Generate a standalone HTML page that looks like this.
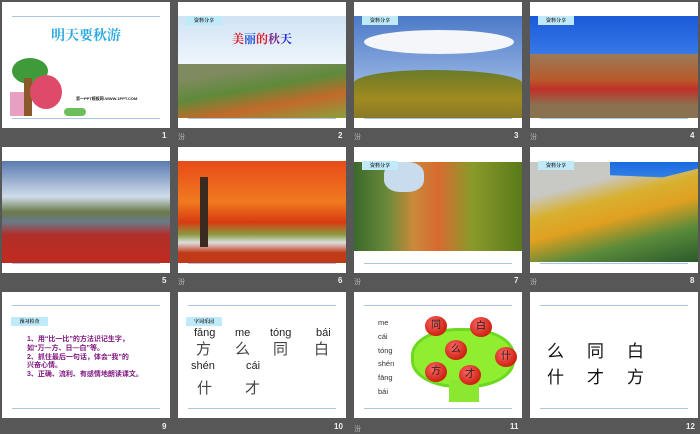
<!DOCTYPE html><html><head><meta charset="utf-8"><style>
*{margin:0;padding:0;box-sizing:border-box}
body{width:700px;height:431px;background:#575757;position:relative;overflow:hidden;font-family:"Liberation Sans","Noto Sans CJK SC",sans-serif}
.s{position:absolute;width:168px;height:126px;background:#fff;overflow:hidden}
.s div{line-height:1}
.l{position:absolute;left:10px;right:10px;height:1px;background:#a9c3e4}
.p{position:absolute;left:0;right:0}
.n{position:absolute;color:#eee;font-size:8px;font-weight:bold}
.ic{position:absolute;color:#bbb;font-size:7px}
.s .tag{position:absolute;left:8px;top:14px;width:36px;height:9px;background:#bfeafa;font-size:5px;font-weight:bold;color:#222;text-align:center;line-height:9px;font-family:"Noto Serif CJK SC",serif}
.s .a{position:absolute;width:22px;height:20px;border-radius:50%;background:radial-gradient(circle at 40% 35%,#f66,#c21 70%);color:#222;font-size:10px;text-align:center;line-height:20px}
.py{position:absolute;font-size:11px;color:#222}
.hz{position:absolute;font-size:15px;color:#444}
</style></head><body>
<!-- 1 -->
<div class="s" style="left:2px;top:2px">
<div class="l" style="top:14px"></div><div class="l" style="top:116px"></div>
<div style="position:absolute;left:0;width:168px;top:26px;text-align:center;color:#2aa8e0;font-size:14px;font-weight:bold;font-family:'Noto Serif CJK SC',serif">明天要秋游</div>
<div style="position:absolute;left:10px;top:56px;width:36px;height:26px;border-radius:50%;background:#3f9a3a"></div>
<div style="position:absolute;left:22px;top:76px;width:8px;height:38px;background:#8a5a2a"></div>
<div style="position:absolute;left:28px;top:73px;width:32px;height:34px;border-radius:50%;background:#e04a6a"></div>
<div style="position:absolute;left:8px;top:90px;width:14px;height:24px;background:#e8a0c0"></div>
<div style="position:absolute;left:62px;top:106px;width:22px;height:8px;border-radius:4px;background:#6cbf5a"></div>
<div style="position:absolute;left:74px;top:95px;font-size:4px;color:#222;font-weight:bold">第一PPT模板网-WWW.1PPT.COM</div>
</div>
<div class="n" style="left:162px;top:131px">1</div>
<!-- 2 -->
<div class="s" style="left:178px;top:2px">
<div class="p" style="top:14px;height:102px;background:linear-gradient(#cfe3f4,#eef5fb 45%,#fff 60%)"></div>
<div class="p" style="top:62px;height:54px;background:linear-gradient(170deg,#7f8a60 20%,#5f8a3a 45%,#c26a2a 70%,#8aa040)"></div>
<div class="l" style="top:116px"></div>
<div class="tag">资料分享</div>
<div style="position:absolute;left:0;width:168px;top:31px;text-align:center;font-size:12px;font-weight:bold;font-family:'Noto Serif CJK SC',serif"><span style="color:#e01b2b">美</span><span style="color:#2b55d8">丽</span><span style="color:#e01b2b">的</span><span style="color:#7a2b8a">秋</span><span style="color:#2b2bd8">天</span></div>
</div>
<div class="ic" style="left:178px;top:132px">汾</div><div class="n" style="left:338px;top:131px">2</div>
<!-- 3 -->
<div class="s" style="left:354px;top:2px">
<div class="p" style="top:14px;height:102px;background:linear-gradient(#4c7ac8,#8eaee0 60%,#9ab 66%)"></div>
<div style="position:absolute;left:10px;top:28px;width:150px;height:24px;border-radius:50%;background:#f4f6fa"></div>
<div class="p" style="top:68px;height:48px;background:linear-gradient(#6a7a2a,#a08a20 60%,#8a7a28);border-radius:50% 60% 0 0/30% 30% 0 0"></div>
<div class="l" style="top:116px"></div><div class="tag">资料分享</div>
</div>
<div class="ic" style="left:354px;top:132px">汾</div><div class="n" style="left:514px;top:131px">3</div>
<!-- 4 -->
<div class="s" style="left:530px;top:2px">
<div class="p" style="top:14px;height:102px;background:linear-gradient(#1a5ad8,#3a7ae8 40%)"></div>
<div class="p" style="top:52px;height:64px;background:linear-gradient(#9a7a5a,#b85a2a 40%,#c0302a 55%,#8a7250 80%)"></div>
<div class="l" style="top:116px"></div><div class="tag">资料分享</div>
</div>
<div class="ic" style="left:530px;top:132px">汾</div><div class="n" style="left:690px;top:131px">4</div>
<!-- 5 -->
<div class="s" style="left:2px;top:147px">
<div class="p" style="top:14px;height:102px;background:linear-gradient(#5a7ab0,#d0dcea 35%,#6a7a4a 50%,#6a7a8a 60%,#b0302a 72%,#c02a20)"></div>
<div class="l" style="top:116px"></div>
</div>
<div class="n" style="left:162px;top:276px">5</div>
<!-- 6 -->
<div class="s" style="left:178px;top:147px">
<div class="p" style="top:14px;height:102px;background:linear-gradient(#e84a18,#f07a20 40%,#d83a10 60%,#8a9a40 72%,#ddd 80%,#c03a18 90%)"></div>
<div style="position:absolute;left:22px;top:30px;width:8px;height:70px;background:#3a2a20"></div>
<div class="l" style="top:116px"></div>
</div>
<div class="ic" style="left:178px;top:277px">汾</div><div class="n" style="left:338px;top:276px">6</div>
<!-- 7 -->
<div class="s" style="left:354px;top:147px">
<div class="p" style="top:15px;height:89px;background:linear-gradient(90deg,#3a6a2a,#6a8a3a 20%,#c88a3a 35%,#d86a30 50%,#8a9a2a 70%,#5a7a1a)"></div>
<div style="position:absolute;left:30px;top:15px;width:40px;height:30px;background:#c8dcee;border-radius:40%"></div>
<div class="l" style="top:116px"></div><div class="tag">资料分享</div>
</div>
<div class="ic" style="left:354px;top:277px">汾</div><div class="n" style="left:514px;top:276px">7</div>
<!-- 8 -->
<div class="s" style="left:530px;top:147px">
<div class="p" style="top:15px;height:100px;background:linear-gradient(165deg,#c8c8c4 25%,#d8b030 40%,#e0a020 55%,#5a8a3a 75%,#2a5a2a)"></div>
<div style="position:absolute;left:80px;top:15px;width:88px;height:22px;background:linear-gradient(#1a6ae0,#3a8ae8);clip-path:polygon(0 0,100% 0,100% 30%,60% 70%,0 60%)"></div>
<div class="l" style="top:116px"></div><div class="tag">资料分享</div>
</div>
<div class="ic" style="left:530px;top:277px">汾</div><div class="n" style="left:690px;top:276px">8</div>
<!-- 9 -->
<div class="s" style="left:2px;top:292px">
<div class="l" style="top:13px"></div><div class="l" style="top:116px"></div>
<div class="tag" style="top:25px;left:9px;width:37px">预习检查</div>
<div style="position:absolute;left:25px;top:44px;font-size:7px;line-height:8.8px;color:#801880;font-weight:bold">1、用“比一比”的方法识记生字，<br>如“万—方、日—白”等。<br>2、抓住最后一句话，体会“我”的<br>兴奋心情。<br>3、正确、流利、有感情地朗读课文。</div>
</div>
<div class="n" style="left:162px;top:422px">9</div>
<!-- 10 -->
<div class="s" style="left:178px;top:292px">
<div class="l" style="top:13px"></div><div class="l" style="top:116px"></div>
<div class="tag" style="top:25px;left:8px">字词乐园</div>
<div class="py" style="top:36px;left:16px">fāng</div>
<div class="py" style="top:36px;left:57px">me</div>
<div class="py" style="top:36px;left:92px">tóng</div>
<div class="py" style="top:36px;left:138px">bái</div>
<div class="hz" style="top:50px;left:18px">方</div>
<div class="hz" style="top:50px;left:57px">么</div>
<div class="hz" style="top:50px;left:95px">同</div>
<div class="hz" style="top:50px;left:136px">白</div>
<div class="py" style="top:69px;left:13px">shén</div>
<div class="py" style="top:69px;left:68px">cái</div>
<div class="hz" style="top:89px;left:19px">什</div>
<div class="hz" style="top:89px;left:67px">才</div>
</div>
<div class="n" style="left:334px;top:422px">10</div>
<!-- 11 -->
<div class="s" style="left:354px;top:292px">
<div class="l" style="top:13px"></div><div class="l" style="top:116px"></div>
<div style="position:absolute;left:24px;top:24px;font-size:7.5px;line-height:13.8px;color:#333">me<br>cái<br>tóng<br>shén<br>fāng<br>bái</div>
<div style="position:absolute;left:57px;top:36px;width:104px;height:60px;border-radius:45%;background:#90ee30;border:3px solid #6cd820"></div>
<div style="position:absolute;left:95px;top:88px;width:30px;height:22px;background:#8ae830"></div>
<div class="a" style="left:71px;top:24px">同</div>
<div class="a" style="left:116px;top:25px">白</div>
<div class="a" style="left:91px;top:48px">么</div>
<div class="a" style="left:141px;top:55px">什</div>
<div class="a" style="left:71px;top:70px">方</div>
<div class="a" style="left:105px;top:73px">才</div>
</div>
<div class="ic" style="left:354px;top:424px">汾</div><div class="n" style="left:510px;top:422px">11</div>
<!-- 12 -->
<div class="s" style="left:530px;top:292px">
<div class="l" style="top:13px"></div><div class="l" style="top:116px"></div>
<div style="position:absolute;left:17px;top:47px;font-size:17px;line-height:26px;color:#111;letter-spacing:23px">么同白<br>什才方</div>
</div>
<div class="n" style="left:686px;top:422px">12</div>
</body></html>
